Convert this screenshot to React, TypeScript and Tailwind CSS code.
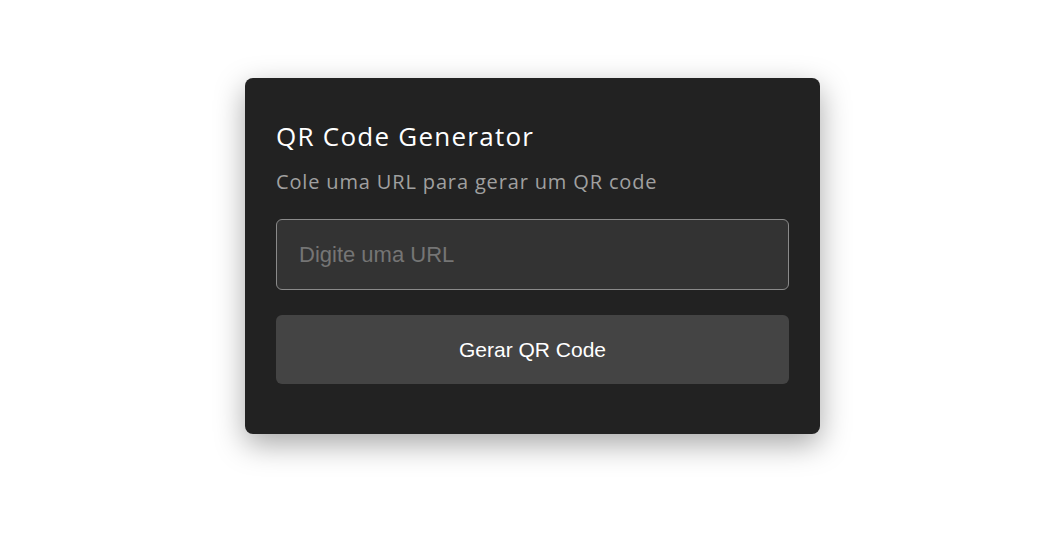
import { useState } from "react";

export default function App() {
  const [url, setUrl] = useState("");

  return (
    <div className="flex min-h-[535px] w-full justify-center bg-white pl-[5px] pt-[78px]">
      <div className="h-[356px] w-[575px] rounded-lg bg-[#222222] px-[31px] pt-[41px] shadow-[0_10px_30px_rgba(0,0,0,0.35)]">
        <h1 className="text-[26px] leading-[34px] font-medium tracking-[1.25px] text-white [font-family:'Open_Sans',sans-serif]">
          QR Code Generator
        </h1>
        <p className="mt-[16px] text-[20px] leading-[26px] tracking-[0.85px] text-[#a0a0a0] [font-family:'Open_Sans',sans-serif]">
          Cole uma URL para gerar um QR code
        </p>
        <input
          type="text"
          value={url}
          onChange={(e) => setUrl(e.target.value)}
          placeholder="Digite uma URL"
          className="mt-[24px] h-[71px] w-full rounded-md border border-[#8a8a8a] bg-[#333333] px-[22px] text-[22px] text-white outline-none placeholder:text-[#757575] [font-family:'Liberation_Sans',Arial,sans-serif]"
        />
        <button
          type="button"
          className="mt-[25px] h-[69px] w-full rounded-md bg-[#444444] text-[21px] text-white [font-family:'Liberation_Sans',Arial,sans-serif]"
        >
          Gerar QR Code
        </button>
      </div>
    </div>
  );
}
